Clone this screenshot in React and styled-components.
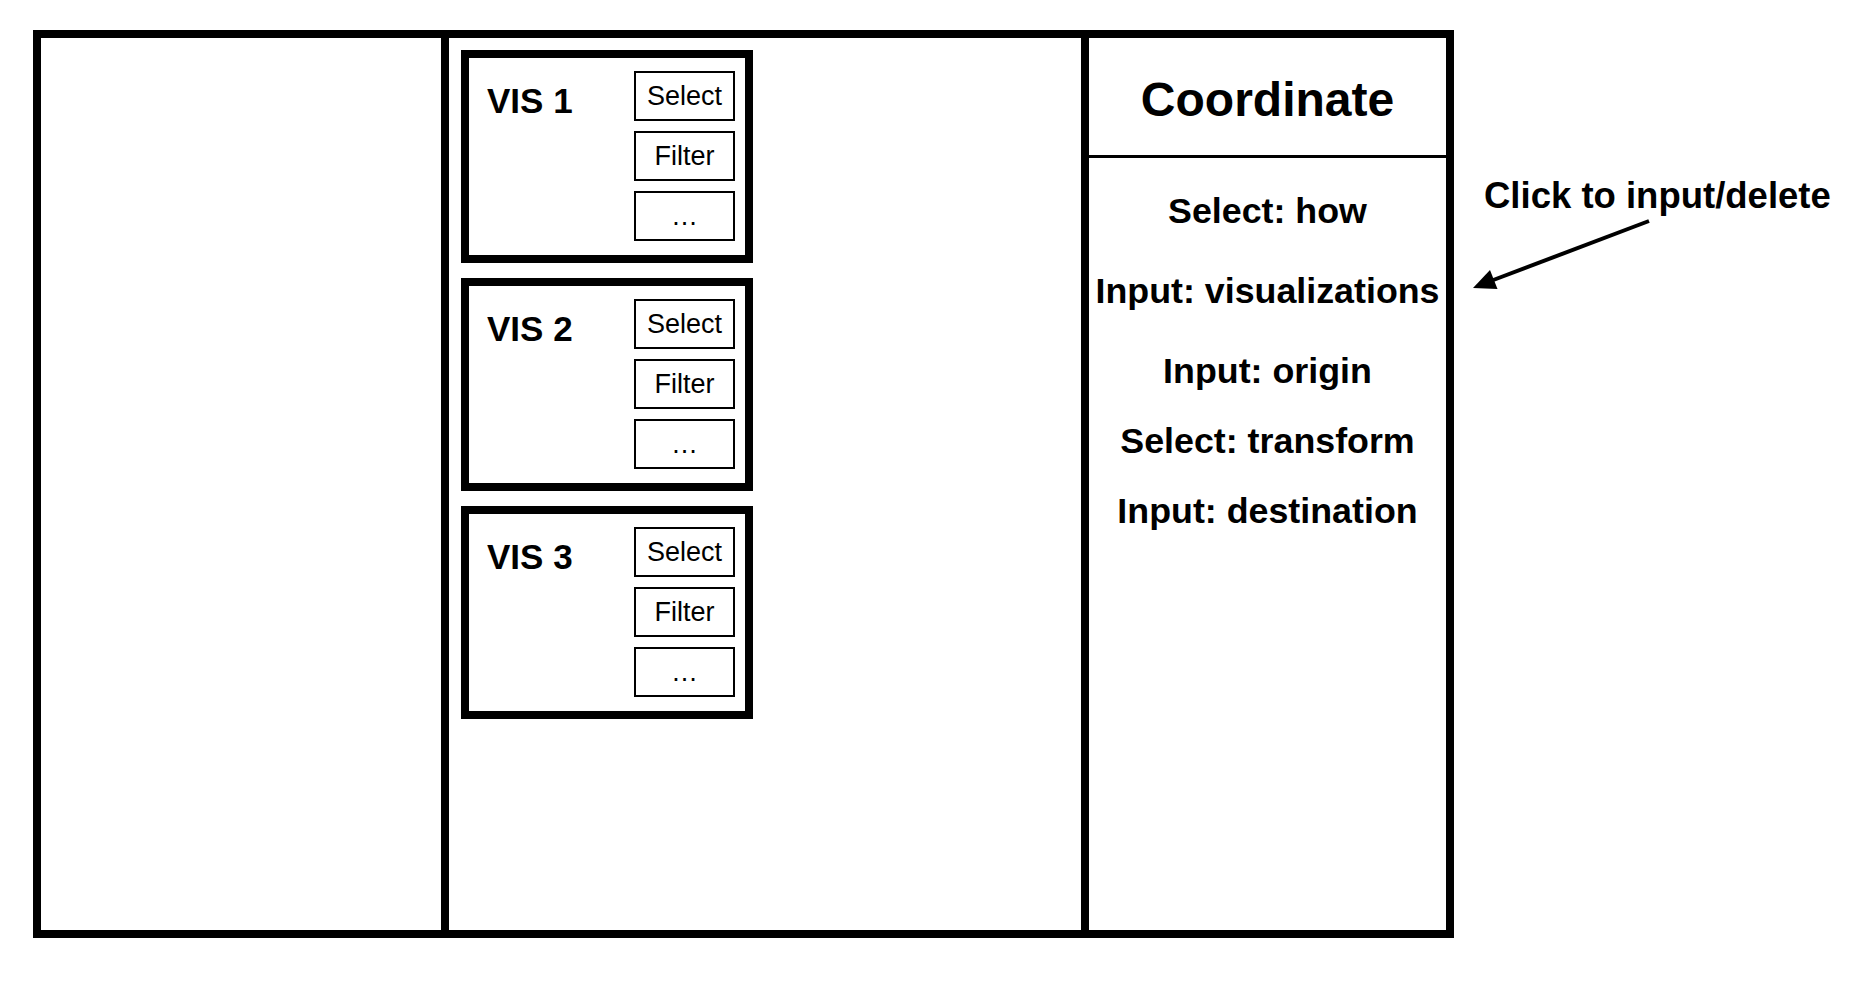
import React from "react";
import styled, { createGlobalStyle } from "styled-components";

const GlobalStyle = createGlobalStyle`
  html, body {
    margin: 0;
    padding: 0;
    background: #ffffff;
  }
  body {
    font-family: "Liberation Sans", Arial, Helvetica, sans-serif;
    color: #000000;
  }
  * { box-sizing: border-box; }
`;

const Page = styled.div`
  display: flex;
  align-items: flex-start;
  padding: 30px 0 0 33px;
  min-height: 998px;
`;

const Frame = styled.div`
  display: flex;
  width: 1421px;
  height: 908px;
  border: 8px solid #000;
  flex: none;
`;

const Column = styled.div`
  flex: none;
  width: ${(p) => p.$width}px;
  height: 100%;
  border-right: ${(p) => (p.$divider ? "8px solid #000" : "none")};
`;

const VisList = styled(Column)`
  display: flex;
  flex-direction: column;
  gap: 15px;
  padding: 12px;
`;

const VisCard = styled.div`
  display: flex;
  justify-content: space-between;
  align-items: flex-start;
  width: 292px;
  height: 213px;
  border: 8px solid #000;
  padding: 13px 10px 0 18px;
`;

const VisTitle = styled.div`
  font-size: 35px;
  font-weight: 700;
  line-height: 35px;
  margin-top: 12px;
`;

const ButtonStack = styled.div`
  display: flex;
  flex-direction: column;
  gap: 10px;
`;

const ActionButton = styled.div`
  display: flex;
  align-items: center;
  justify-content: center;
  width: 101px;
  height: 50px;
  border: 2px solid #000;
  font-size: 27px;
  font-weight: 400;
  line-height: 1;
`;

const CoordinatePanel = styled(Column)`
  display: flex;
  flex-direction: column;
  flex: 1;
`;

const PanelHeader = styled.div`
  display: flex;
  align-items: center;
  justify-content: center;
  height: 120px;
  padding-top: 6px;
  border-bottom: 3px solid #000;
  font-size: 48px;
  font-weight: 700;
`;

const FieldList = styled.div`
  display: flex;
  flex-direction: column;
  align-items: center;
  padding-top: 33px;
`;

const FieldItem = styled.div`
  font-size: 35.8px;
  font-weight: 700;
  line-height: 40px;
  height: 40px;
  margin-top: ${(p) => p.$space}px;
  white-space: nowrap;
`;

const Annotation = styled.div`
  position: relative;
  flex: none;
  margin: 148px 0 0 16px;
  padding-left: 14px;
  width: 390px;
  height: 130px;
`;

const AnnotationText = styled.div`
  font-size: 36.5px;
  font-weight: 700;
  line-height: 36px;
  white-space: nowrap;
`;

const ArrowSvg = styled.svg`
  position: absolute;
  left: 0;
  top: 32px;
`;

const visItems = ["VIS 1", "VIS 2", "VIS 3"];
const actions = ["Select", "Filter", "…"];
const fields = [
  { label: "Select: how", space: 0 },
  { label: "Input: visualizations", space: 40 },
  { label: "Input: origin", space: 40 },
  { label: "Select: transform", space: 30 },
  { label: "Input: destination", space: 30 },
];

export default function App() {
  return (
    <>
      <GlobalStyle />
      <Page>
        <Frame>
          <Column $width={408} $divider />
          <VisList $width={640} $divider>
            {visItems.map((name) => (
              <VisCard key={name}>
                <VisTitle>{name}</VisTitle>
                <ButtonStack>
                  {actions.map((a) => (
                    <ActionButton key={a}>{a}</ActionButton>
                  ))}
                </ButtonStack>
              </VisCard>
            ))}
          </VisList>
          <CoordinatePanel $width={357}>
            <PanelHeader>Coordinate</PanelHeader>
            <FieldList>
              {fields.map((f) => (
                <FieldItem key={f.label} $space={f.space}>
                  {f.label}
                </FieldItem>
              ))}
            </FieldList>
          </CoordinatePanel>
        </Frame>
        <Annotation>
          <AnnotationText>Click to input/delete</AnnotationText>
          <ArrowSvg width="190" height="90" viewBox="0 0 190 90">
            <line
              x1="179"
              y1="11"
              x2="22"
              y2="70.5"
              stroke="#000"
              strokeWidth="4"
            />
            <polygon points="3,78 27.5,79 20,60" fill="#000" />
          </ArrowSvg>
        </Annotation>
      </Page>
    </>
  );
}
